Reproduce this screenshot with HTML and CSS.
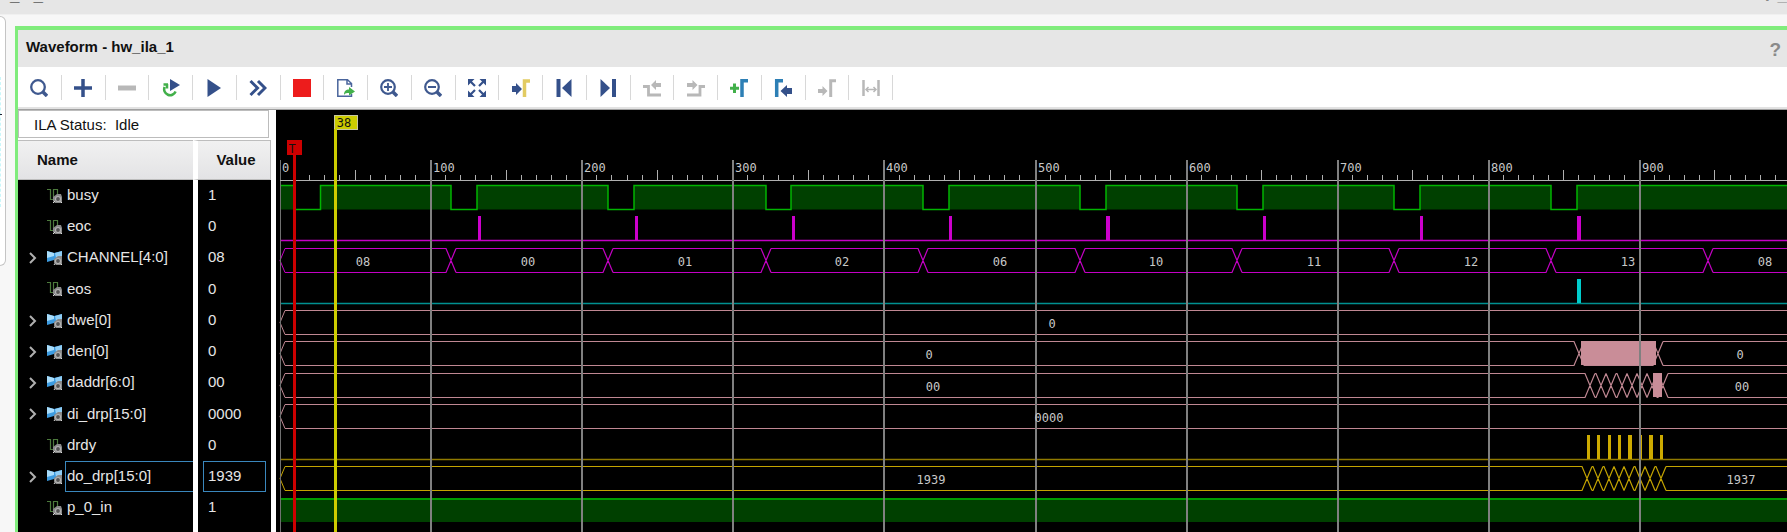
FILE: index.html
```html
<!DOCTYPE html>
<html lang="en">
<head>
<meta charset="utf-8">
<title>Waveform - hw_ila_1</title>
<link rel="stylesheet" href="styles.css">
</head>
<body>
<svg class="defs" aria-hidden="true">
  <symbol id="bit" viewBox="0 0 16 16">
    <path d="M0 1.5h3.5v10h3v-10h4V7" fill="none" stroke="#4c7a3c" stroke-width="1.2"/>
    <path d="M6 9l4-3h4l1 3v6H8l-2-2z" fill="#8a8a8a"/>
    <circle cx="11" cy="11" r="2.5" fill="#555" stroke="#b4b4b4" stroke-width="1.2"/>
    <path d="M8 13l-2 2M13.5 13.500l1.500 1.500" stroke="#ddd"/>
  </symbol>
  <symbol id="bus" viewBox="0 0 16 16">
    <path d="M0 1l7 2 8-2v10l-8-1-7 2z" fill="#3c9be0"/>
    <path d="M0 1l7 2v3L0 8z" fill="#a8dcfa"/>
    <path d="M8 3l7-2v5L9 8z" fill="#8fcdf5"/>
    <path d="M7 9l4-3h4v9H9l-2-2z" fill="#8a8a8a"/>
    <circle cx="11" cy="11" r="2.5" fill="#555" stroke="#b4b4b4" stroke-width="1.2"/>
    <path d="M8 13.500l-1 1.500M13.500 13.500l1.500 1.500" stroke="#ddd"/>
  </symbol>
</svg>
<header class="topbar"><span class="topbar-title">_ &nbsp; _</span><span class="topbar-tools">? _</span></header>
<div class="workspace">
  <aside class="side"></aside>
  <main class="panel">
    <div class="panel-title"><h1>Waveform - hw_ila_1</h1><button class="help" aria-label="Help">?</button></div>
    <div class="toolbar" role="toolbar"><div class="tools">
      <button aria-label="Search"><svg viewBox="0 0 18 18"><circle cx="8" cy="8" r="6.8" fill="none" stroke="#3f598f" stroke-width="2.3"/><path d="M12.500 12.500l4.500 4.500" stroke="#3f598f" stroke-width="3.5"/></svg></button>
      <button aria-label="Add"><svg viewBox="0 0 18 18"><path d="M9 0v18M0 9h18" stroke="#34508a" stroke-width="3.500"/></svg></button>
      <button aria-label="Remove"><svg viewBox="0 0 18 18"><path d="M0 9h18" stroke="#b8b8b8" stroke-width="5"/></svg></button>
      <button aria-label="Restart trigger"><svg viewBox="0 0 18 18"><path d="M6 5.500H1.500M5 5v4.500M2.600 8a5.800 5.800 0 1 0 11 4.500" fill="none" stroke="#42b04a" stroke-width="2.500"/><path d="M8 0l10 6-10 6z" fill="#34508a"/></svg></button>
      <button aria-label="Run trigger"><svg viewBox="0 0 18 18"><path d="M2.500 0L16 9 2.500 18z" fill="#34508a"/></svg></button>
      <button aria-label="Run immediate"><svg viewBox="0 0 18 18"><path d="M1.500 2l7 7-7 7M9 2l7 7-7 7" fill="none" stroke="#34508a" stroke-width="3"/></svg></button>
      <button aria-label="Stop"><svg viewBox="0 0 18 18"><path d="M0 0h18v18H0z" fill="#ed1c1c"/></svg></button>
      <button aria-label="Export data"><svg viewBox="0 0 18 18"><path d="M14.500 8V4.500L10.500.8H.8v16.400h13.700V15M10 1v4h4" fill="none" stroke="#4a659c" stroke-width="1.500"/><path d="M7 16c0-4 2-5.500 5-5.500V8l6 4.500-6 4V14c-2 0-4 0-5 2z" fill="#42b04a"/></svg></button>
      <button aria-label="Zoom in"><svg viewBox="0 0 18 18"><circle cx="8" cy="8" r="6.800" fill="none" stroke="#3f598f" stroke-width="2.200"/><path d="M12.500 12.500l4.500 4.500" stroke="#3f598f" stroke-width="3.500"/><path d="M8 4v8M4 8h8" stroke="#3f598f" stroke-width="1.800"/></svg></button>
      <button aria-label="Zoom out"><svg viewBox="0 0 18 18"><circle cx="8" cy="8" r="6.800" fill="none" stroke="#3f598f" stroke-width="2.200"/><path d="M12.500 12.500l4.500 4.500" stroke="#3f598f" stroke-width="3.500"/><path d="M4 8h8" stroke="#3f598f" stroke-width="2"/></svg></button>
      <button aria-label="Zoom fit"><svg viewBox="0 0 18 18"><path d="M0 0h6.500L0 6.500zM18 0v6.500L11.500 0zM0 18v-6.500L6.500 18zM18 18h-6.500l6.500-6.500z" fill="#34508a"/><path d="M2 2l5 5M16 2l-5 5M2 16l5-5M16 16l-5-5" stroke="#34508a" stroke-width="2.200"/></svg></button>
      <button aria-label="Go to cursor"><svg viewBox="0 0 18 18"><path d="M0 7h4V4l6 6-6 6v-3H0z" fill="#34508a"/><path d="M12.500 18V2H18" fill="none" stroke="#e2cb62" stroke-width="3.500"/></svg></button>
      <button aria-label="Go to start"><svg viewBox="0 0 18 18"><path d="M3.500 0v18" stroke="#34508a" stroke-width="4"/><path d="M16.500 0v18L7 9z" fill="#34508a"/></svg></button>
      <button aria-label="Go to end"><svg viewBox="0 0 18 18"><path d="M15 0v18" stroke="#34508a" stroke-width="4"/><path d="M1.500 0v18L11 9z" fill="#34508a"/></svg></button>
      <button aria-label="Previous transition" disabled><svg viewBox="0 0 18 18"><path d="M0 7.500h5.500V16H18" fill="none" stroke="#b8b8b8" stroke-width="2.800"/><path d="M8 6l5-5v3h5v4h-5v3z" fill="#b8b8b8"/></svg></button>
      <button aria-label="Next transition" disabled><svg viewBox="0 0 18 18"><path d="M18 7.500h-5V16H0" fill="none" stroke="#b8b8b8" stroke-width="2.800"/><path d="M10.500 6l-5-5v3H0v4h5.500v3z" fill="#b8b8b8"/></svg></button>
      <button aria-label="Add marker"><svg viewBox="0 0 18 18"><path d="M4.500 4.500v9.500M0 9.200h9" stroke="#42b04a" stroke-width="3"/><path d="M12 18V1.700h6" fill="none" stroke="#2d7fb5" stroke-width="3.500"/></svg></button>
      <button aria-label="Previous marker"><svg viewBox="0 0 18 18"><path d="M2.700 18V1.700H9" fill="none" stroke="#2d7fb5" stroke-width="3.500"/><path d="M18 9h-5V6l-6.500 6 6.500 6v-3h5z" fill="#34508a"/></svg></button>
      <button aria-label="Next marker" disabled><svg viewBox="0 0 18 18"><path d="M0 10h4.500V7l5 5-5 5v-3H0z" fill="#b8b8b8"/><path d="M12.700 18V1.700H18" fill="none" stroke="#b8b8b8" stroke-width="3"/></svg></button>
      <button aria-label="Measure" disabled><svg viewBox="0 0 18 18"><path d="M1.500 1v16M16.500 1v16" stroke="#b8b8b8" stroke-width="2.500"/><path d="M4 10.500h10M6.500 8l-2.500 2.500L6.500 13M11.500 8l2.500 2.500L11.500 13" fill="none" stroke="#b8b8b8" stroke-width="1.500"/></svg></button>
    </div></div>
    <div class="content">
      <section class="signals">
        <div class="status">ILA Status:&nbsp; Idle</div>
        <table>
          <thead><tr><th class="name">Name</th><th class="value">Value</th></tr></thead>
          <tbody id="rows"></tbody>
        </table>
      </section>
      <svg class="wave" id="wave" role="img" aria-label="Waveforms"></svg>
    </div>
  </main>
</div>
<script src="wave.js"></script>
</body>
</html>
```
FILE: styles.css
```css
* { box-sizing: border-box; }
body {
  margin: 0;
  height: 100vh;
  display: flex;
  flex-direction: column;
  overflow: hidden;
  background: #f7f7f7;
  color: #111;
  font: 15px/18px "Liberation Sans", Arial, sans-serif;
}
button { border: 0; padding: 0; margin: 0; background: none; font: inherit; color: inherit; }
.defs { display: none; }
.topbar {
  flex: none;
  height: 15px;
  padding: 0 0 0 10px;
  display: flex;
  justify-content: space-between;
  align-items: flex-end;
  overflow: hidden;
  background: #e6e6e6;
  border-bottom: 1px solid #f0f0f0;
  font-size: 17px;
  font-weight: bold;
}
.topbar span { height: 27px; }
.topbar-tools { color: #888; }
.workspace { flex: 1; min-height: 0; display: flex; gap: 9px; }
.side {
  position: relative;
  width: 6px;
  height: 250px;
  margin-top: 1px;
  background: #fff;
  border: 1px solid #c4c4c4;
  border-left: 0;
  border-radius: 0 6px 6px 0;
}
.side::before {
  content: "";
  position: absolute;
  left: 0;
  top: 60px;
  height: 130px;
  border-left: 1px dashed #c9f7fa;
}
.side::after {
  content: "";
  position: absolute;
  left: 0;
  top: 97px;
  width: 2px;
  height: 1px;
  background: #223;
}
.panel {
  flex: 1;
  min-width: 0;
  margin-top: 11px;
  display: flex;
  flex-direction: column;
  border: solid #80ec7c;
  border-width: 4px 0 0 3px;
  background: #fff;
}
.panel-title {
  flex: none;
  height: 37px;
  padding: 0 6px 3px 8px;
  display: flex;
  align-items: center;
  justify-content: space-between;
  background: #e6e6e6;
}
h1 { margin: 0; font-size: 15px; line-height: 18px; }
.help { padding-top: 6px; color: #8a8a8a; font-size: 19px; font-weight: bold; }
.toolbar { flex: none; height: 42px; padding-top: 8px; border-bottom: 2px solid #e2e2e2; }
.tools { display: flex; max-width: 875px; }
.tools button {
  flex: 1;
  height: 25px;
  display: grid;
  place-items: center;
  border-right: 1px solid #d8d8d8;
}
.tools svg { width: 18px; height: 18px; }
.content { flex: 1; min-height: 0; display: flex; border-top: 1px solid #a0a0a0; }
.signals { flex: none; width: 258px; background: #fff; overflow: hidden; }
.status {
  width: 251px;
  height: 28px;
  margin-bottom: 2px;
  padding: 5px 15px;
  border: 1px solid #bcbcbc;
}
table { width: 253px; table-layout: fixed; border-collapse: separate; border-spacing: 0; }
th {
  height: 40px;
  padding: 0;
  background: linear-gradient(#f1f1f1, #e3e3e5) padding-box;
  border-top: 1px solid #bdbdbd;
  border-bottom: 1px solid #bdbdbd;
}
.name { width: 175px; }
.value { border-left: 5px solid #fff; }
th.name { padding-left: 19px; text-align: left; }
th.value { padding-left: 4px; border-right: 1px solid #bdbdbd; }
td { height: 31px; padding: 0; background: #000; color: #e6e6e6; }
tbody tr:nth-child(4n) td { height: 32px; }
td.value { padding: 0 5px; }
td.value span, .signal { display: block; height: 31px; padding: 5px 4px; border: 1px solid transparent; }
.line { display: grid; grid-template-columns: 29px 18px 1fr; align-items: center; }
.line svg { width: 16px; height: 16px; }
.line .signal { padding: 5px 1px; }
.selected .signal, .selected .value span { border-color: #3a87bd; }
.selected .signal { border-right: 0; }
.expand { width: 16px; height: 16px; margin-left: 7px; display: grid; place-items: center; }
.line .expand svg { width: 8px; height: 12px; fill: none; stroke: #b0b0b0; stroke-width: 2; }
.wave { flex: 1; min-width: 0; background: #000; }
.wave text { font: 12px "DejaVu Sans Mono", monospace; fill: #c8c8c8; }
.wave .middle { text-anchor: middle; }
.wave .dark { fill: #111; }
```
FILE: wave.js
```javascript
const signals = [
  ["busy", "1"], ["eoc", "0"], ["CHANNEL[4:0]", "08"], ["eos", "0"],
  ["dwe[0]", "0"], ["den[0]", "0"], ["daddr[6:0]", "00"], ["di_drp[15:0]", "0000"],
  ["drdy", "0"], ["do_drp[15:0]", "1939"], ["p_0_in", "1"]
];

document.getElementById("rows").innerHTML = signals.map(([name, value]) => {
  const bus = name.includes("[");
  const expand = bus
    ? `<button class="expand" aria-label="Expand ${name}"><svg viewBox="0 0 8 12"><path d="M1 1l5 5-5 5"/></svg></button>`
    : "<span></span>";
  return `<tr${name.startsWith("do_") ? ' class="selected"' : ""}>
    <td class="name"><div class="line">${expand}<svg><use href="#${bus ? "bus" : "bit"}"/></svg><span class="signal">${name}</span></div></td>
    <td class="value"><span>${value}</span></td></tr>`;
}).join("") + '<tr><td class="name"></td><td class="value"></td></tr>';

const START = 4, END = 2600, PERIOD = 157.1, H = 24;
const MAGENTA = "#c400c4", PINK = "#c08893", GOLD = "#c4a400";
const rowTop = row => 75 + Math.round(row * 31.25);
const out = [];
const path = (d, stroke, width = 1, fill = "none") =>
  out.push(`<path d="${d}" stroke="${stroke}" stroke-width="${width}" fill="${fill}"/>`);
const rect = (x, y, w, h, fill) =>
  out.push(`<rect x="${x}" y="${y}" width="${w}" height="${h}" fill="${fill}"/>`);
const text = (x, y, s, cls = "middle") =>
  out.push(`<text x="${x}" y="${y}" class="${cls}">${s}</text>`);

// A bus is a pair of rails that swap at each crossing.
function bus(row, crossings, color, half = 5) {
  const a = rowTop(row) + 0.5, m = a + H / 2, b = a + H;
  let d = "", left = START + 5;
  path(`M${left} ${a}L${START} ${m}L${left} ${b}`, color);
  for (const x of crossings) {
    d += `M${left} ${a}H${x - half}L${x + half} ${b}M${left} ${b}H${x - half}L${x + half} ${a}`;
    left = x + half;
  }
  path(d + `M${left} ${a}H${END}M${left} ${b}H${END}`, color, 1.2);
}

function pulses(row, list, color, base) {
  path(`M${START} ${rowTop(row) + H + 0.5}H${END}`, base, 1.5);
  for (const [x, w] of list) rect(x, rowTop(row), w, H, color);
}

const cycles = [0, 1, 2, 3, 4, 5, 6, 7];

// busy
{
  const a = rowTop(0) + 0.5, b = a + H;
  rect(START, a, 15, H, "#004000");
  let d = `M${START} ${a}H19V${b}H44.5`, x = 44.5;
  for (const k of cycles) {
    const fall = Math.round(175.3 + k * PERIOD), rise = Math.round(201.2 + k * PERIOD);
    rect(x, a, fall - x, H, "#004000");
    d += `V${a}H${fall}V${b}H${rise}`;
    x = rise;
  }
  rect(x, a, END - x, H, "#004000");
  path(d + `V${a}H${END}`, "#00b400", 1.5);
}
pulses(1, cycles.map(k => [Math.round(201.7 + k * PERIOD), [4, 7].includes(k) ? 4 : 3]), "#cc00cc", MAGENTA);
bus(2, [...cycles, 8].map(k => Math.round(175.3 + k * PERIOD)), MAGENTA);
pulses(3, [[1301, 4]], "#00cccc", "#009090");
bus(4, [], PINK);
bus(5, [1303, 1382], PINK);
rect(1305, rowTop(5), 75, H, "#c98d98");
bus(6, [1314, 1325, 1335, 1346, 1356, 1366, 1376, 1387], PINK);
rect(1377, rowTop(6), 9, H, "#c98d98");
bus(7, [], PINK);
pulses(8, [[1311, 3], [1321, 3], [1332, 3], [1342, 3], [1352, 4], [1363, 3], [1373, 4], [1384, 3]], "#ccaa00", "#907a00");
bus(9, [1311, 1322, 1333, 1343, 1353, 1364, 1374, 1385], GOLD);
rect(START, rowTop(10), END, H, "#004000");
rect(START, rowTop(10), END, 2, "#009a00");

// Ruler and grid
rect(START, 50, 1, 400, "#707070");
rect(START, 70, END, 1, "#b0b0b0");
for (let t = 0; t < 100; t++) {
  const x = Math.round(START - 1 + t * 15.11);
  if (t % 10 === 0) {
    if (t) rect(x, 50, 2, 400, "#808080");
    text(x + 3, 62, t * 10, "");
  } else {
    const h = t % 5 ? 5 : 10;
    if (t > 1) rect(x, 70 - h, 1, h, "#b0b0b0");
  }
}

[[87, "08"], [252, "00"], [409, "01"], [566, "02"], [724, "06"], [880, "10"], [1038, "11"], [1195, "12"], [1352, "13"], [1489, "08"]]
  .forEach(([x, s]) => text(x, rowTop(2) + 18, s));
[[4, 776, "0"], [5, 653, "0"], [5, 1464, "0"], [6, 657, "00"], [6, 1466, "00"], [7, 773, "0000"], [9, 655, "1939"], [9, 1465, "1937"]]
  .forEach(([row, x, s]) => text(x, rowTop(row) + 18, s));

// Trigger and cursor
rect(11, 30, 15, 15, "#cc0000");
text(16, 43, "T", "middle dark");
rect(17, 45, 3, 400, "#cc0000");
rect(58, 5, 24, 15, "#c8c8a0");
rect(59, 6, 22, 13, "#cccc00");
rect(58, 19, 3, 430, "#cccc00");
text(68, 17, "38", "middle dark");

document.getElementById("wave").innerHTML = out.join("");
```
